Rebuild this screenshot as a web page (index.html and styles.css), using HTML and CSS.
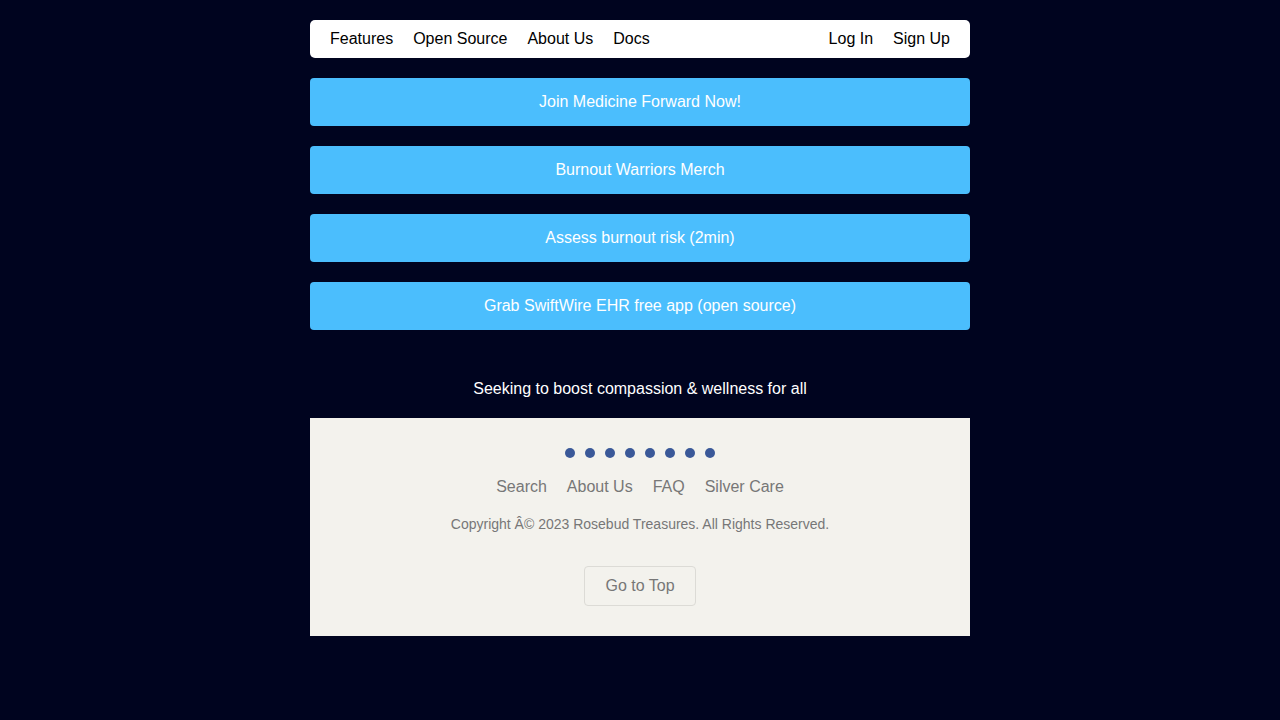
FILE: index.html
```html
<!DOCTYPE html>
<html lang="en">
<head>
<meta charset="utf-8">
<title>Medicine Forward</title>
<link rel="stylesheet" href="styles.css">
</head>
<body>
<div class="page">
  <nav class="nav">
    <div class="nav-group">
      <a href="#">Features</a>
      <a href="#">Open Source</a>
      <a href="#">About Us</a>
      <a href="#">Docs</a>
    </div>
    <div class="nav-group">
      <a href="#">Log In</a>
      <a href="#">Sign Up</a>
    </div>
  </nav>
  <div class="links">
    <a class="btn" href="#">Join Medicine Forward Now!</a>
    <a class="btn" href="#">Burnout Warriors Merch</a>
    <a class="btn" href="#">Assess burnout risk (2min)</a>
    <a class="btn" href="#">Grab SwiftWire EHR free app (open source)</a>
  </div>
  <p class="tagline">Seeking to boost compassion &amp; wellness for all</p>
  <footer class="footer">
    <div class="dots">
      <span></span><span></span><span></span><span></span><span></span><span></span><span></span><span></span>
    </div>
    <div class="foot-links">
      <a href="#">Search</a>
      <a href="#">About Us</a>
      <a href="#">FAQ</a>
      <a href="#">Silver Care</a>
    </div>
    <p class="copy">Copyright Â© 2023 Rosebud Treasures. All Rights Reserved.</p>
    <button class="top-btn" type="button">Go to Top</button>
  </footer>
</div>
</body>
</html>
```
FILE: styles.css
```css
* { box-sizing: border-box; }
html, body { margin: 0; padding: 0; }
body {
  background: #00041f;
  font-family: "Liberation Sans", Arial, Helvetica, sans-serif;
  font-size: 16px;
  color: #fff;
}
a { text-decoration: none; color: inherit; }
.page {
  width: 660px;
  margin: 0 auto;
  padding-top: 20px;
}
.nav {
  background: #fff;
  border-radius: 5px;
  height: 38px;
  padding: 0 20px;
  display: flex;
  justify-content: space-between;
  align-items: center;
}
.nav-group {
  display: flex;
  gap: 20px;
}
.nav-group a {
  color: #000;
  line-height: 20px;
}
.links {
  display: flex;
  flex-direction: column;
  gap: 20px;
  margin-top: 20px;
}
.btn {
  display: flex;
  align-items: center;
  justify-content: center;
  height: 48px;
  background: #4bbefd;
  color: #fff;
  border-radius: 4px;
}
.tagline {
  margin: 0;
  padding: 49px 0 19px;
  line-height: 20px;
  text-align: center;
}
.footer {
  background: #f3f2ed;
  padding: 30px 0 30px;
  display: flex;
  flex-direction: column;
  align-items: center;
}
.dots {
  display: flex;
  gap: 10px;
  height: 10px;
}
.dots span {
  width: 10px;
  height: 10px;
  border-radius: 50%;
  background: #3a5898;
}
.foot-links {
  display: flex;
  gap: 20px;
  margin-top: 19px;
  line-height: 20px;
}
.foot-links a { color: #777; }
.copy {
  margin: 18px 0 0;
  font-size: 14px;
  line-height: 18px;
  color: #777;
}
.top-btn {
  margin-top: 33px;
  width: 112px;
  height: 40px;
  background: transparent;
  border: 1px solid #dcdbd6;
  border-radius: 4px;
  color: #777;
  font-family: inherit;
  font-size: 16px;
  padding: 0;
}
```
